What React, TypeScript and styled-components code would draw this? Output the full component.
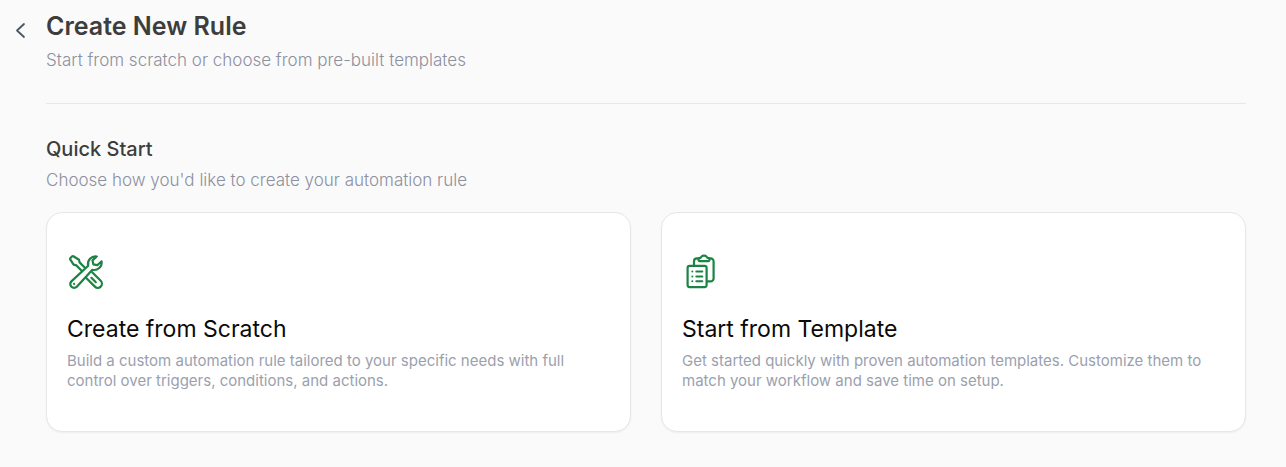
import React from 'react';
import styled, { createGlobalStyle } from 'styled-components';

const GlobalStyle = createGlobalStyle`
  *, *::before, *::after { box-sizing: border-box; }
  body {
    margin: 0;
    background: #fafafa;
    color: #3d3d3d;
    font-family: Inter, 'Liberation Sans', sans-serif;
  }
  h1, h2, h3, p { margin: 0; }
`;

const Page = styled.main`
  display: grid;
  grid-template-columns: 30px minmax(0, 1fr);
  gap: 0 8px;
  padding: 8px 40px 32px 8px;
`;

const BackButton = styled.button`
  display: flex;
  align-items: center;
  justify-content: center;
  align-self: start;
  width: 24px;
  height: 24px;
  margin-top: 10px;
  padding: 0;
  border: 0;
  background: none;
  color: #4b5563;
  cursor: pointer;
`;

const Header = styled.header`
  padding-bottom: 31px;
  border-bottom: 1px solid #e5e7eb;
`;

const PageTitle = styled.h1`
  font-size: 25px;
  line-height: 36px;
  font-weight: 600;
`;

const Subtitle = styled.p`
  margin-top: 4px;
  font-size: 17px;
  line-height: 24px;
  font-weight: 300;
  color: #8c909f;
`;

const Section = styled.section`
  grid-column: 2;
  padding-top: 30px;
`;

const SectionTitle = styled.h2`
  font-size: 20px;
  line-height: 30px;
  font-weight: 500;
`;

const CardGrid = styled.div`
  display: grid;
  grid-template-columns: repeat(2, minmax(0, 1fr));
  gap: 30px;
  margin-top: 20px;
`;

const Card = styled.button`
  display: flex;
  flex-direction: column;
  align-items: flex-start;
  padding: 40px 20px;
  border: 1px solid #e5e7eb;
  border-radius: 16px;
  background: #ffffff;
  box-shadow: 0 1px 2px rgba(0, 0, 0, 0.05);
  font: inherit;
  text-align: left;
  cursor: pointer;
`;

const Icon = styled.svg`
  display: block;
  width: 38px;
  height: 38px;
  fill: none;
  stroke: #1b8443;
  stroke-width: 2.2;
  stroke-linecap: round;
  stroke-linejoin: round;
`;

const CardTitle = styled.h3`
  margin-top: 22px;
  font-size: 23px;
  line-height: 32px;
  font-weight: 400;
  color: #0a0a0a;
`;

const CardText = styled.p`
  margin-top: 6px;
  font-size: 15px;
  line-height: 20px;
  color: #9b9fae;
`;

const ToolsIcon = () => (
  <Icon viewBox="0 0 38 38" aria-hidden="true">
    <path d="m17.9 14.7-5.3-5.3-.6-2.6-5.6-3.6a1 1 0 0 0-1.2.1L3.3 5.2a1 1 0 0 0-.1 1.2l3.4 5.2 2.7.8 5.4 5.4" />
    <path d="M29.8 3.5a7.6 7.6 0 0 0-8.6 9.3L4.4 28.4a3.8 3.8 0 1 0 5.4 5.4l15.6-17a7.6 7.6 0 0 0 9.2-8.5l-4.3 3.9-4-.8-.8-4Z" />
    <path d="m25.2 19.2 8.5 8.6a4.1 4.1 0 0 1-5.8 5.8l-8.9-8.9" />
    <path d="m24.4 24.8 4.4 4.4M7.1 30.9h.01" />
  </Icon>
);

const TemplateIcon = () => (
  <Icon viewBox="0 0 38 38" aria-hidden="true">
    <rect x="5.6" y="12.9" width="19" height="21.2" rx="2" />
    <path d="M12 12.6V8.4a3 3 0 0 1 3-3h1.8M27.4 5.4h1.2a3 3 0 0 1 3 3v17a3 3 0 0 1-3 3h-3.6" />
    <path d="M18.6 4.8a3.8 3.8 0 0 1 6.8 0h.6a1.5 1.5 0 0 1 1.5 1.5v.8a1 1 0 0 1-1 1h-9a1 1 0 0 1-1-1v-.8a1.5 1.5 0 0 1 1.5-1.5Z" />
    <path strokeWidth="2" d="M10.3 18.6h.01M14.3 18.6h6M10.3 23.4h.01M14.3 23.4h6M10.3 28.2h.01M14.3 28.2h6" />
  </Icon>
);

const options = [
  {
    icon: <ToolsIcon />,
    title: 'Create from Scratch',
    text: 'Build a custom automation rule tailored to your specific needs with full control over triggers, conditions, and actions.',
  },
  {
    icon: <TemplateIcon />,
    title: 'Start from Template',
    text: 'Get started quickly with proven automation templates. Customize them to match your workflow and save time on setup.',
  },
];

export default function App() {
  return (
    <>
      <GlobalStyle />
      <Page>
        <BackButton type="button" aria-label="Back">
          <svg width="24" height="24" viewBox="0 0 24 24" fill="none" stroke="currentColor" strokeWidth="1.8" strokeLinecap="round" strokeLinejoin="round">
            <path d="M16 6 9 12.5l7 6.5" />
          </svg>
        </BackButton>
        <Header>
          <PageTitle>Create New Rule</PageTitle>
          <Subtitle>Start from scratch or choose from pre-built templates</Subtitle>
        </Header>
        <Section>
          <SectionTitle>Quick Start</SectionTitle>
          <Subtitle>Choose how you'd like to create your automation rule</Subtitle>
          <CardGrid>
            {options.map((option) => (
              <Card type="button" key={option.title}>
                {option.icon}
                <CardTitle>{option.title}</CardTitle>
                <CardText>{option.text}</CardText>
              </Card>
            ))}
          </CardGrid>
        </Section>
      </Page>
    </>
  );
}
